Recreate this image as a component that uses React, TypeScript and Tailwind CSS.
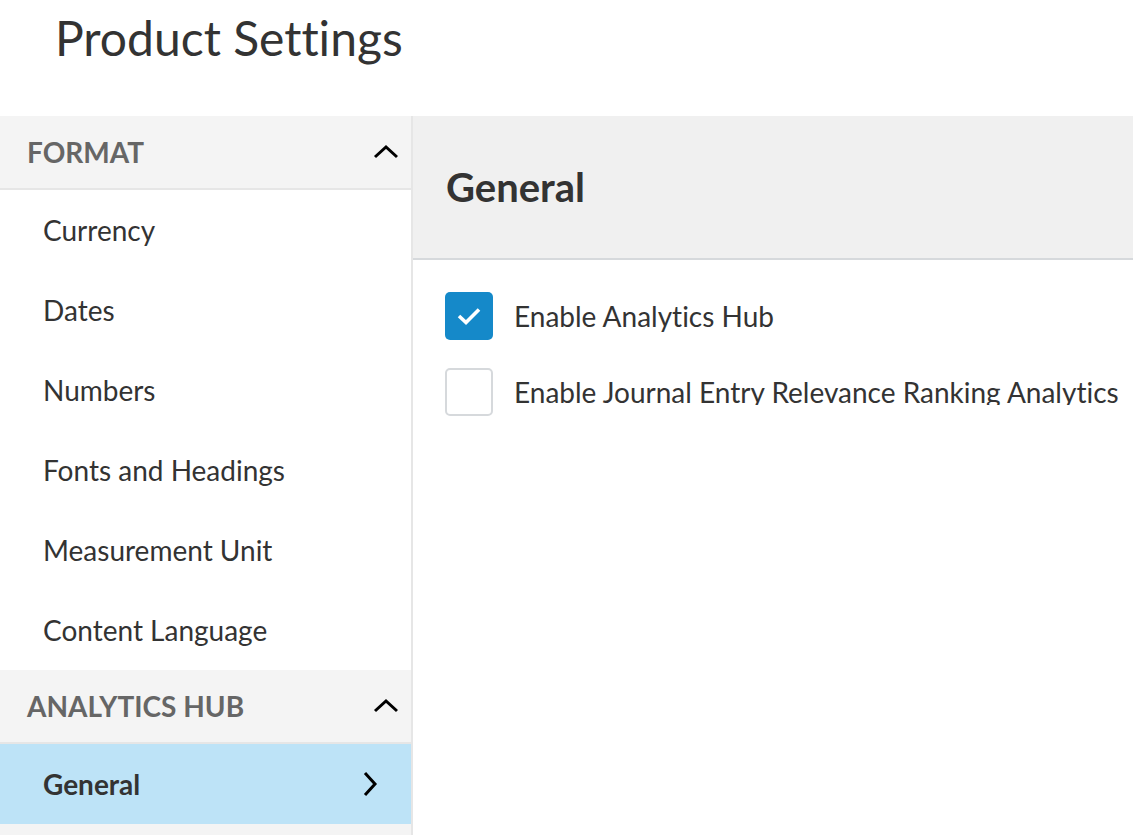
import React from 'react';

const ChevronUp = () => (
  <svg width="26" height="16" viewBox="0 0 26 16" fill="none">
    <path d="M2 13L13 3L24 13" stroke="#000" strokeWidth="3" />
  </svg>
);

const ChevronRight = () => (
  <svg width="16" height="26" viewBox="0 0 16 26" fill="none">
    <path d="M3 2L13 13L3 24" stroke="#000" strokeWidth="3" />
  </svg>
);

const SectionHeader = ({ title }: { title: string }) => (
  <div className="flex h-[74px] items-center justify-between border-b-2 border-[#e6e6e6] bg-[#f4f4f4] pl-[27px] pr-[12px]">
    <span className="text-[28px] font-bold text-[#666666]">{title}</span>
    <ChevronUp />
  </div>
);

const NavItem = ({ label }: { label: string }) => (
  <div className="flex h-[80px] items-center pl-[43px] text-[28px] text-[#333333]">{label}</div>
);

const Checkbox = ({ checked, label, clip }: { checked: boolean; label: string; clip?: boolean }) => (
  <div className="flex items-center gap-[21px]">
    {checked ? (
      <div className="flex h-[48px] w-[48px] shrink-0 items-center justify-center rounded-[5px] bg-[#1589c9]">
        <svg width="26" height="20" viewBox="0 0 26 20" fill="none">
          <path d="M3 10L10 16.5L23 3.5" stroke="#fff" strokeWidth="3.6" />
        </svg>
      </div>
    ) : (
      <div className="h-[48px] w-[48px] shrink-0 rounded-[5px] border-2 border-[#d6d9dc] bg-white" />
    )}
    <div className="h-[34px] whitespace-nowrap text-[28px] leading-[34px] text-[#333333]">
      <div className={clip ? 'h-[30px] overflow-hidden' : ''}>{label}</div>
    </div>
  </div>
);

export default function App() {
  return (
    <div
      className="h-[835px] w-[1133px] overflow-hidden bg-white [font-variant-ligatures:none]"
      style={{ fontFamily: 'Lato, "Noto Sans", sans-serif' }}
    >
      <h1 className="h-[116px] pl-[55px] pt-[8px] text-[48px] leading-[60px] text-[#333333]">Product Settings</h1>
      <div className="flex">
        <aside className="w-[413px] shrink-0 border-r-2 border-[#e6e6e6]">
          <SectionHeader title="FORMAT" />
          {['Currency', 'Dates', 'Numbers', 'Fonts and Headings', 'Measurement Unit', 'Content Language'].map((item) => (
            <NavItem key={item} label={item} />
          ))}
          <SectionHeader title="ANALYTICS HUB" />
          <div className="flex h-[80px] items-center justify-between bg-[#bde3f7] pl-[43px] pr-[33px] text-[28px] font-bold text-[#333333]">
            <span>General</span>
            <ChevronRight />
          </div>
          <div className="h-[80px] bg-[#f4f4f4]" />
        </aside>
        <main className="min-w-0 flex-1">
          <div className="flex h-[144px] items-center border-b-2 border-[#d6d9dc] bg-[#f0f0f0] pl-[33px]">
            <h2 className="text-[40px] font-bold text-[#333333]">General</h2>
          </div>
          <div className="flex flex-col gap-[28px] pl-[32px] pt-[32px]">
            <Checkbox checked label="Enable Analytics Hub" />
            <Checkbox checked={false} clip label="Enable Journal Entry Relevance Ranking Analytics" />
          </div>
        </main>
      </div>
    </div>
  );
}
